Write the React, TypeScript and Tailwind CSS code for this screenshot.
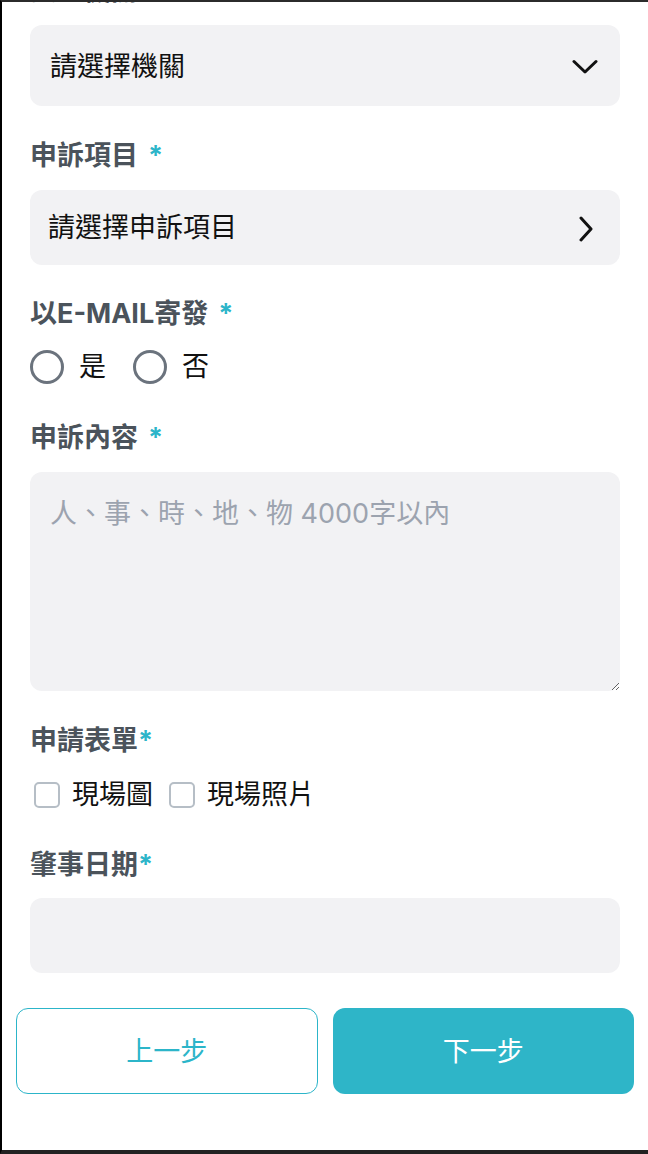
import React, { useState } from "react";

const font = "font-['Inter','Noto_Sans_CJK_TC',sans-serif]";

const Label = ({ text, spaced = true }: { text: string; spaced?: boolean }) => (
  <div className="h-[36px] flex items-center text-[27px] leading-[36px] font-bold text-[#4b535b] pt-[2px]">
    {text}
    <span className={`text-[#2cb5c9] ${spaced ? "ml-[10px]" : ""}`}>*</span>
  </div>
);

const ChevronDown = () => (
  <svg width="26" height="16" viewBox="0 0 26 16" fill="none">
    <path d="M2 2.5 L13 13 L24 2.5" stroke="#111" strokeWidth="3" strokeLinecap="round" strokeLinejoin="round" />
  </svg>
);

const ChevronRight = () => (
  <svg width="16" height="26" viewBox="0 0 16 26" fill="none">
    <path d="M3 2 L13 13 L3 24" stroke="#111" strokeWidth="3" strokeLinecap="round" strokeLinejoin="round" />
  </svg>
);

const App = () => {
  const [email, setEmail] = useState<string | null>(null);
  const [forms, setForms] = useState<string[]>([]);

  const toggleForm = (f: string) =>
    setForms(forms.includes(f) ? forms.filter((x) => x !== f) : [...forms, f]);

  return (
    <div className={`${font} w-[648px] h-[1154px] overflow-hidden bg-white border-l-2 border-l-black border-t-2 border-t-[#2b2b2b] border-b-4 border-b-[#222]`}>
      <div className="px-[14px]">
        <div className="px-[14px] -mt-[29px]">
          {/* agency */}
          <div className="h-[36px] flex items-center text-[27px] font-bold text-[#4b535b]">
            受理機關<span className="text-[#2cb5c9] ml-[10px]">*</span>
          </div>
          <div className="mt-[16px] h-[81px] rounded-[12px] bg-[#f2f2f4] flex items-center justify-between pl-[20px] pr-[22px] pt-[3px]">
            <span className="text-[27px] text-[#111]">請選擇機關</span>
            <ChevronDown />
          </div>

          {/* item */}
          <div className="mt-[31px]">
            <Label text="申訴項目" />
          </div>
          <div className="mt-[17px] h-[75px] rounded-[12px] bg-[#f2f2f4] flex items-center justify-between pl-[18px] pr-[26px] pt-[2px]">
            <span className="text-[27px] text-[#111]">請選擇申訴項目</span>
            <ChevronRight />
          </div>

          {/* email */}
          <div className="mt-[30px]">
            <Label text="以E-MAIL寄發" />
          </div>
          <div className="mt-[19px] h-[34px] flex items-center">
            {["是", "否"].map((v, i) => (
              <label key={v} className={`flex items-center cursor-pointer ${i > 0 ? "ml-[27px]" : ""}`} onClick={() => setEmail(v)}>
                <span className="w-[34px] h-[34px] rounded-full border-[3px] border-[#6b737d] flex items-center justify-center">
                  {email === v && <span className="w-[16px] h-[16px] rounded-full bg-[#2cb5c9]" />}
                </span>
                <span className="ml-[15px] text-[27px] text-[#111]">{v}</span>
              </label>
            ))}
          </div>

          {/* content */}
          <div className="mt-[35px]">
            <Label text="申訴內容" />
          </div>
          <textarea
            className="mt-[17px] block w-full h-[219px] rounded-[12px] bg-[#f2f2f4] px-[20px] py-[22px] text-[27px] leading-[40px] text-[#111] placeholder:text-[#9ca3af] outline-none"
            placeholder="人、事、時、地、物 4000字以內"
          />

          {/* forms */}
          <div className="mt-[31px]">
            <Label text="申請表單" spaced={false} />
          </div>
          <div className="mt-[19px] h-[36px] flex items-center pl-[4px]">
            {["現場圖", "現場照片"].map((v, i) => (
              <label key={v} className={`flex items-center cursor-pointer ${i > 0 ? "ml-[16px]" : ""}`} onClick={() => toggleForm(v)}>
                <span className={`w-[26px] h-[26px] rounded-[5px] border-[2.5px] border-[#b6bec6] ${forms.includes(v) ? "bg-[#2cb5c9]" : ""}`} />
                <span className="ml-[12px] text-[27px] text-[#111]">{v}</span>
              </label>
            ))}
          </div>

          {/* date */}
          <div className="mt-[33px]">
            <Label text="肇事日期" spaced={false} />
          </div>
          <div className="mt-[16px] h-[75px] rounded-[12px] bg-[#f2f2f4]" />
        </div>

        {/* buttons */}
        <div className="mt-[35px] grid grid-cols-2 gap-[15px]">
          <button className="h-[86px] rounded-[12px] border border-[#2cb5c9] bg-white text-[27px] text-[#2cb5c9] pt-[2px]">
            上一步
          </button>
          <button className="h-[86px] rounded-[12px] bg-[#2eb5c8] text-[27px] text-white pt-[2px]">
            下一步
          </button>
        </div>
      </div>
    </div>
  );
};

export default App;
